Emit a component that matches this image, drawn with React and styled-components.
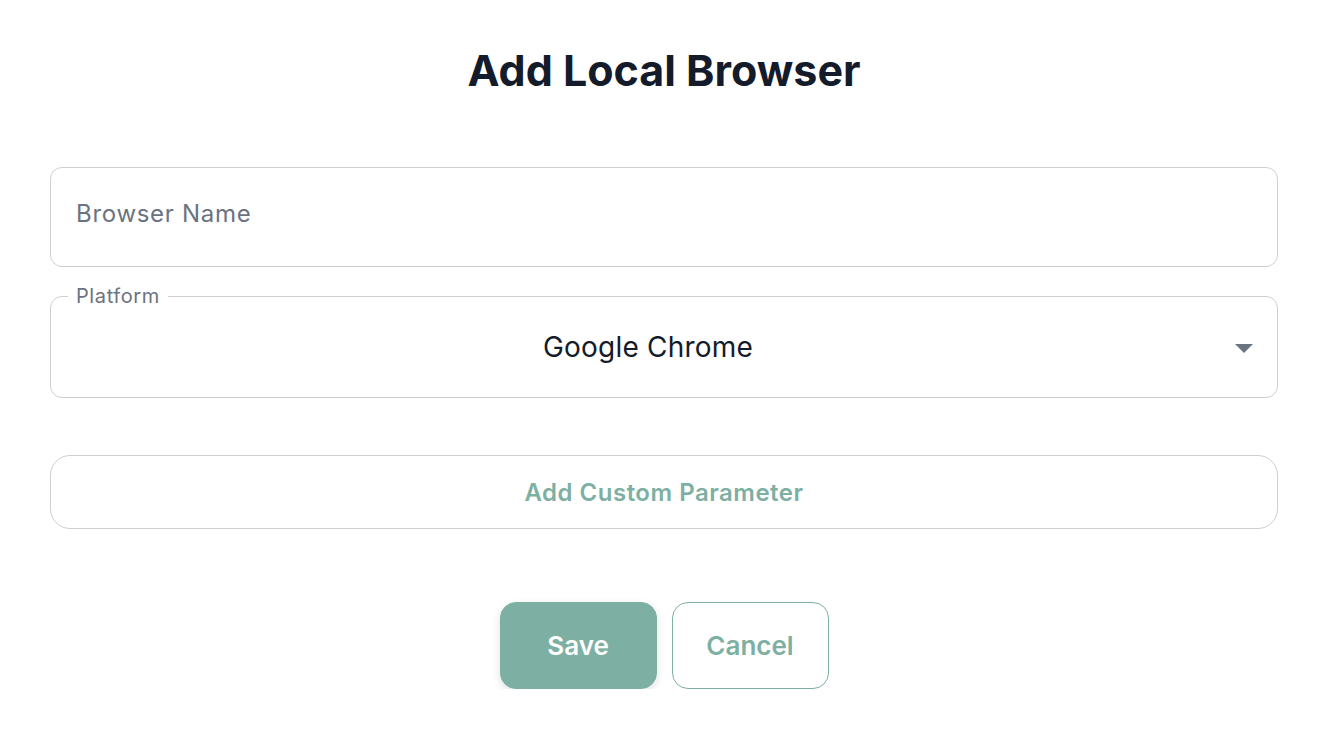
import styled, { createGlobalStyle } from "styled-components";

const GlobalStyle = createGlobalStyle`
  body {
    margin: 0;
    background: #ffffff;
    font-family: Inter, "Noto Sans", sans-serif;
  }
`;

const teal = "#7db0a3";

const Page = styled.div`
  display: flex;
  flex-direction: column;
  padding: 0 50px;
`;

const Title = styled.h1`
  margin: 42px 0 0;
  text-align: center;
  font-size: 43px;
  line-height: 56px;
  font-weight: 700;
  color: #141b2b;
`;

const Form = styled.div`
  display: flex;
  flex-direction: column;
  margin-top: 69px;
`;

const TextField = styled.input`
  box-sizing: border-box;
  height: 100px;
  width: 100%;
  padding: 0 25px 8px;
  border: 1px solid #cfcfd2;
  border-radius: 12px;
  font-family: inherit;
  font-size: 24px;
  letter-spacing: 0.7px;
  color: #141b2b;
  outline: none;
  &::placeholder {
    color: #6b7280;
  }
`;

const Outline = styled.fieldset`
  margin: 19px 0 0;
  padding: 0;
  border: 1px solid #cfcfd2;
  border-radius: 12px;
  min-width: 0;
`;

const Legend = styled.legend`
  margin-left: 17px;
  padding: 0 8px;
  font-size: 20px;
  line-height: 20px;
  letter-spacing: 0.6px;
  color: #6b7280;
`;

const SelectBox = styled.div`
  position: relative;
  display: flex;
  align-items: center;
  justify-content: center;
  height: 100px;
  margin-top: -9px;
  padding-right: 32px;
  font-size: 28px;
  letter-spacing: 0.2px;
  color: #141b2b;
  cursor: pointer;
`;

const Caret = styled.span`
  position: absolute;
  right: 24px;
  top: 47px;
  width: 0;
  height: 0;
  border-left: 9px solid transparent;
  border-right: 9px solid transparent;
  border-top: 9px solid #6b7280;
`;

const WideButton = styled.button`
  box-sizing: border-box;
  height: 74px;
  margin-top: 57px;
  width: 100%;
  background: #ffffff;
  border: 1px solid #cfcfd2;
  border-radius: 20px;
  font-family: inherit;
  font-size: 24px;
  font-weight: 600;
  letter-spacing: 0.5px;
  color: ${teal};
  cursor: pointer;
`;

const Actions = styled.div`
  display: flex;
  justify-content: center;
  gap: 15px;
  margin-top: 73px;
`;

const ActionButton = styled.button`
  box-sizing: border-box;
  width: 157px;
  height: 87px;
  border-radius: 16px;
  font-family: inherit;
  font-size: 26px;
  font-weight: 600;
  cursor: pointer;
  background: ${(p) => (p.$primary ? teal : "#ffffff")};
  color: ${(p) => (p.$primary ? "#ffffff" : teal)};
  border: 1px solid ${teal};
  box-shadow: ${(p) => (p.$primary ? "0 3px 8px rgba(0, 0, 0, 0.12)" : "none")};
`;

const App = () => {
  return (
    <>
      <GlobalStyle />
      <Page>
        <Title>Add Local Browser</Title>
        <Form>
          <TextField placeholder="Browser Name" />
          <Outline>
            <Legend>Platform</Legend>
            <SelectBox>
              Google Chrome
              <Caret />
            </SelectBox>
          </Outline>
          <WideButton>Add Custom Parameter</WideButton>
        </Form>
        <Actions>
          <ActionButton $primary>Save</ActionButton>
          <ActionButton>Cancel</ActionButton>
        </Actions>
      </Page>
    </>
  );
};

export default App;
